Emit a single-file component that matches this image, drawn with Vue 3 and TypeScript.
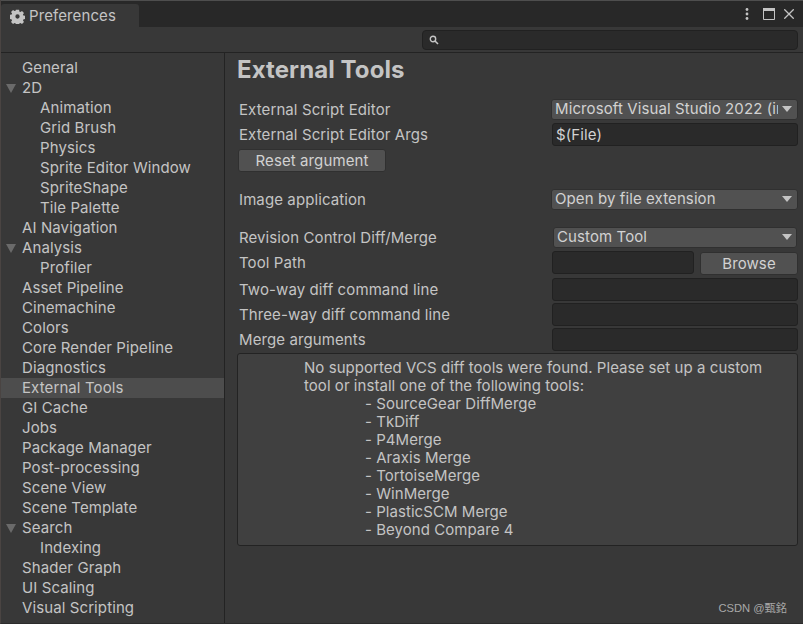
<script setup lang="ts">
interface Item { label: string; level: number; arrow?: boolean; active?: boolean }
const items: Item[] = [
  { label: 'General', level: 0 },
  { label: '2D', level: 0, arrow: true },
  { label: 'Animation', level: 1 },
  { label: 'Grid Brush', level: 1 },
  { label: 'Physics', level: 1 },
  { label: 'Sprite Editor Window', level: 1 },
  { label: 'SpriteShape', level: 1 },
  { label: 'Tile Palette', level: 1 },
  { label: 'AI Navigation', level: 0 },
  { label: 'Analysis', level: 0, arrow: true },
  { label: 'Profiler', level: 1 },
  { label: 'Asset Pipeline', level: 0 },
  { label: 'Cinemachine', level: 0 },
  { label: 'Colors', level: 0 },
  { label: 'Core Render Pipeline', level: 0 },
  { label: 'Diagnostics', level: 0 },
  { label: 'External Tools', level: 0, active: true },
  { label: 'GI Cache', level: 0 },
  { label: 'Jobs', level: 0 },
  { label: 'Package Manager', level: 0 },
  { label: 'Post-processing', level: 0 },
  { label: 'Scene View', level: 0 },
  { label: 'Scene Template', level: 0 },
  { label: 'Search', level: 0, arrow: true },
  { label: 'Indexing', level: 1 },
  { label: 'Shader Graph', level: 0 },
  { label: 'UI Scaling', level: 0 },
  { label: 'Visual Scripting', level: 0 },
]
const tools = ['SourceGear DiffMerge', 'TkDiff', 'P4Merge', 'Araxis Merge', 'TortoiseMerge', 'WinMerge', 'PlasticSCM Merge', 'Beyond Compare 4']
</script>

<template>
  <div class="window">
    <header class="tabbar">
      <div class="tab">
        <svg class="gear" width="15" height="15" viewBox="0 0 16 16">
          <path fill="#c4c4c4" fill-rule="evenodd" d="M6.3 .8h3.4l.4 2 1 .4 1.7-1.1 2.1 2.1-1.1 1.7.4 1 2 .4v3.4l-2 .4-.4 1 1.1 1.7-2.1 2.1-1.7-1.1-1 .4-.4 2H6.3l-.4-2-1-.4-1.7 1.1-2.1-2.1 1.1-1.7-.4-1-2-.4V6.3l2-.4.4-1-1.1-1.7 2.1-2.1 1.7 1.1 1-.4zM8 5.7a2.3 2.3 0 1 0 0 4.6 2.3 2.3 0 0 0 0-4.6z" />
        </svg>
        <span>Preferences</span>
      </div>
      <div class="controls">
        <svg class="dots" width="4" height="12" viewBox="0 0 4 12"><g fill="#c4c4c4"><circle cx="2" cy="1.5" r="1.4" /><circle cx="2" cy="6" r="1.4" /><circle cx="2" cy="10.5" r="1.4" /></g></svg>
        <svg class="max" width="12" height="12" viewBox="0 0 12 12"><path fill="none" stroke="#c4c4c4" d="M.5 .5h11v11H.5z" /><path fill="#c4c4c4" d="M0 0h12v3H0z" /></svg>
        <svg width="10" height="10" viewBox="0 0 10 10"><path fill="none" stroke="#c4c4c4" stroke-width="1.3" d="M.3 .3l9.4 9.4M9.7 .3L.3 9.7" /></svg>
      </div>
    </header>
    <div class="toolbar">
      <div class="search">
        <svg width="10" height="10" viewBox="0 0 10 10"><circle cx="4" cy="4" r="2.7" fill="none" stroke="#c4c4c4" stroke-width="1.4" /><path d="M6 6l3 3" stroke="#c4c4c4" stroke-width="1.6" /></svg>
      </div>
    </div>
    <div class="body">
      <nav class="sidebar">
        <div v-for="item in items" :key="item.label" class="item" :class="{ active: item.active, sub: item.level === 1 }">
          <span v-if="item.arrow" class="arrow"></span>{{ item.label }}
        </div>
      </nav>
      <main class="content">
        <h1>External Tools</h1>
        <div class="row r1">
          <label>External Script Editor</label>
          <div class="select"><span class="clip">Microsoft Visual Studio 2022 (internal)</span><i class="caret"></i></div>
        </div>
        <div class="row r2">
          <label>External Script Editor Args</label>
          <div class="input text">$(File)</div>
        </div>
        <button class="btn reset">Reset argument</button>
        <div class="row r3">
          <label>Image application</label>
          <div class="select"><span class="clip">Open by file extension</span><i class="caret"></i></div>
        </div>
        <div class="row r4">
          <label>Revision Control Diff/Merge</label>
          <div class="select inset"><span class="clip">Custom Tool</span><i class="caret"></i></div>
        </div>
        <div class="row r5">
          <label>Tool Path</label>
          <div class="pathgroup"><div class="input path"></div><button class="btn browse">Browse</button></div>
        </div>
        <div class="row r6 first"><label>Two-way diff command line</label><div class="input grow"></div></div>
        <div class="row r6"><label>Three-way diff command line</label><div class="input grow"></div></div>
        <div class="row r6"><label>Merge arguments</label><div class="input grow"></div></div>
        <section class="help">
          <p>No supported VCS diff tools were found. Please set up a custom<br />tool or install one of the following tools:</p>
          <ul><li v-for="t in tools" :key="t">- {{ t }}</li></ul>
        </section>
      </main>
    </div>
    <div class="mark">CSDN @甄銘</div>
  </div>
</template>

<style>
html, body { margin: 0; background: #383838; }
</style>

<style scoped>
.window {
  position: relative;
  width: 803px;
  height: 624px;
  overflow: hidden;
  background: #383838;
  color: #c4c4c4;
  font: 15px/20px Inter, "Noto Sans CJK SC", sans-serif;
  letter-spacing: 0.1px;
  box-sizing: border-box;
  border-left: 1px solid #4a4442;
  border-bottom: 1px solid #2c2c2c;
}
.tabbar {
  height: 27px;
  background: #282828;
  border-top: 1px solid #4e4e4e;
  display: flex;
  justify-content: space-between;
  box-sizing: border-box;
}
.tab {
  width: 138px;
  margin-top: 3px;
  padding-top: 1px;
  background: #383838;
  border-radius: 3px 3px 0 0;
  display: flex;
  align-items: center;
  gap: 4px;
  padding-left: 9px;
  box-sizing: border-box;
}
.controls {
  display: flex;
  align-items: center;
  padding: 0 9px 0 0;
}
.dots { margin-right: 14px; }
.max { margin-right: 9px; }
.toolbar {
  height: 26px;
  box-sizing: border-box;
  border-bottom: 1px solid #232323;
  padding: 3px 5px 0 421px;
}
.search {
  height: 20px;
  background: #2a2a2a;
  border: 1px solid #212121;
  border-radius: 4px;
  display: flex;
  align-items: center;
  padding-left: 6px;
  box-sizing: border-box;
}
.body { display: flex; height: 570px; }
.sidebar {
  width: 224px;
  flex: none;
  border-right: 1px solid #232323;
  padding-top: 5px;
  box-sizing: border-box;
}
.item {
  position: relative;
  height: 20px;
  padding-left: 21px;
}
.item.sub { padding-left: 39px; }
.item.active { background: #4d4d4d; }
.arrow {
  position: absolute;
  left: 5px;
  top: 6px;
  border-left: 5px solid transparent;
  border-right: 5px solid transparent;
  border-top: 9px solid #6a6a6a;
}
.content {
  flex: 1;
  min-width: 0;
  padding: 0 5px 0 12px;
}
h1 {
  margin: 0;
  font-size: 24px;
  font-weight: 700;
  line-height: 34px;
  height: 35px;
  box-sizing: border-box;
  color: #c4c4c4;
}
.row { display: flex; align-items: center; padding-left: 2px; }
.row label { width: 312px; flex: none; }
.r1 { height: 21px; margin-top: 11px; }
.r2 { height: 23px; margin-top: 3px; }
.r3 { height: 21px; margin-top: 17px; }
.r4 { height: 21px; margin-top: 17px; }
.r5 { height: 24px; margin-top: 3px; }
.r6 { height: 23px; margin-top: 2px; }
.r6.first { margin-top: 3px; }
.select {
  flex: 1;
  min-width: 0;
  height: 21px;
  display: flex;
  align-items: center;
  justify-content: space-between;
  background: #515151;
  border: 1px solid #303030;
  border-radius: 3px;
  box-sizing: border-box;
  padding: 0 5px 1px 3px;
  color: #d2d2d2;
}
.select.inset { margin-left: 2px; margin-right: 1px; padding-right: 4px; }
.clip { flex: 1; min-width: 0; overflow: hidden; white-space: nowrap; margin-right: 4px; }
.caret {
  flex: none;
  border-left: 5px solid transparent;
  border-right: 5px solid transparent;
  border-top: 6px solid #c4c4c4;
}
.input {
  height: 23px;
  background: #2a2a2a;
  border: 1px solid #212121;
  border-radius: 3px;
  box-sizing: border-box;
}
.text { flex: 1; padding-left: 3px; line-height: 22px; margin-left: 1px; color: #d2d2d2; }
.grow { flex: 1; margin-left: 1px; }
.pathgroup { flex: 1; display: flex; justify-content: space-between; margin-left: 1px; }
.path { width: 142px; }
.btn {
  font: inherit;
  letter-spacing: inherit;
  color: #d2d2d2;
  background: #515151;
  border: 1px solid #303030;
  border-radius: 3px;
  padding: 0;
}
.reset { display: block; width: 148px; height: 23px; margin: 3px 0 0 1px; }
.browse { width: 98px; height: 23px; margin-top: 1px; }
.help {
  margin-top: 2px;
  height: 193px;
  background: #404040;
  border: 1px solid #232323;
  border-radius: 3px;
  box-sizing: border-box;
  padding: 5px 0 0 66px;
  line-height: 18px;
  letter-spacing: 0.05px;
}
.help p { margin: 0; }
.help ul { list-style: none; margin: 0; padding: 0 0 0 61px; }
.mark {
  position: absolute;
  right: 16px;
  bottom: 7px;
  font: 11.2px/16px "Liberation Sans", "Noto Sans CJK SC", sans-serif;
  letter-spacing: 0;
  color: #a8a8a8;
}
</style>
